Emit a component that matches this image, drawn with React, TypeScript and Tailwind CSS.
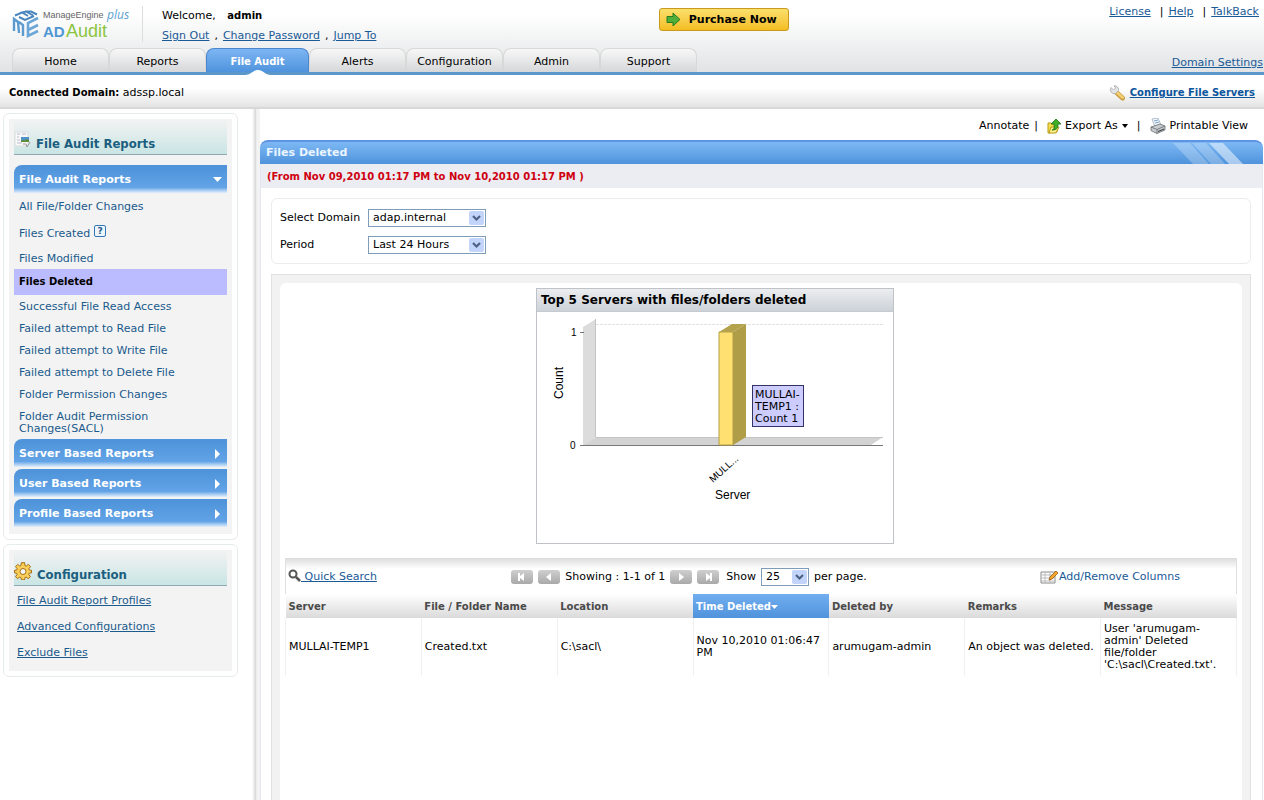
import React from 'react';

const tabs = ['Home', 'Reports', 'File Audit', 'Alerts', 'Configuration', 'Admin', 'Support'];

const reportLinks = [
  'Successful File Read Access',
  'Failed attempt to Read File',
  'Failed attempt to Write File',
  'Failed attempt to Delete File',
  'Folder Permission Changes',
];

const configLinks = ['File Audit Report Profiles', 'Advanced Configurations', 'Exclude Files'];

const columns = ['Server', 'File / Folder Name', 'Location', 'Time Deleted', 'Deleted by', 'Remarks', 'Message'];

const rows = [
  [
    'MULLAI-TEMP1',
    'Created.txt',
    'C:\\sacl\\',
    'Nov 10,2010 01:06:47 PM',
    'arumugam-admin',
    'An object was deleted.',
    "User 'arumugam-admin' Deleted file/folder 'C:\\sacl\\Created.txt'.",
  ],
];

const Logo = () => (
  <svg width="122" height="36" viewBox="0 0 122 36" role="img" aria-label="ManageEngine ADAudit Plus">
    {/* Hatched cube: lid, "M" side and "E" side */}
    <g fill="none" strokeWidth="2">
      <path d="M3 9.500l7-3 6 3.500M8 7l6-1.500 7 4M13 5.500h6l6 3M7 11l6 3 9-4" stroke="#4a86bd" />
      <path d="M2 25V13l4 3 1 11M7 16l4 3v11" stroke="#5b9bd0" strokeWidth="2.400" />
      <path d="M26 12l-10 5v13l10-5M16 24l10-5" stroke="#6aa6d8" strokeWidth="2.600" />
    </g>
    <text x="31" y="12" fontSize="9" fill="#666" fontFamily="Liberation Sans, sans-serif">ManageEngine</text>
    <text x="95" y="13" fontSize="12" fontStyle="italic" fill="#5c9fd2" fontFamily="Open Sans, sans-serif">plus</text>
    <text x="31" y="31" fontSize="15" fontWeight="bold" fill="#4f97d4" fontFamily="Liberation Sans, sans-serif">AD</text>
    <text x="54" y="31" fontSize="18" fill="#8bc53f" fontFamily="Liberation Sans, sans-serif">Audit</text>
  </svg>
);

const WrenchIcon = () => (
  <svg width="17" height="16" viewBox="0 0 17 16" aria-hidden="true">
    <path d="M8 8l5.500 5" stroke="#c79a3e" strokeWidth="5" strokeLinecap="round" />
    <path d="M8 7.500l5.500 5" stroke="#f3cf74" strokeWidth="3" strokeLinecap="round" />
    <path d="M2 2.500l2.500 2.500 2-2L5 .8a4 4 0 0 1 4.500 4.700L6.500 8.500A4 4 0 0 1 2 2.500z" fill="#e2e4e6" stroke="#a4a8ac" strokeWidth=".8" />
  </svg>
);

const ExportIcon = () => (
  <svg width="14" height="16" viewBox="0 0 14 16" aria-hidden="true">
    <path d="M1 5h3l1 1h5v8l-9 1z" fill="#f7e04b" stroke="#b59a1a" />
    <path d="M2 15l2-6h8l-3 6z" fill="#fff08a" stroke="#b59a1a" />
    <path d="M5 12c3-1 2-3 2-6H4l5-5 5 5h-3c0 4-1 6-6 6z" fill="#3fae29" stroke="#1e6e12" strokeWidth=".8" />
  </svg>
);

const PrinterIcon = () => (
  <svg width="16" height="16" viewBox="0 0 16 16" aria-hidden="true">
    <path d="M2 1l6-1 3 7-6 2z" fill="#f4f8fc" stroke="#9fb0c2" strokeWidth=".8" />
    <path d="M4 3l4-1M5 5l4-1" stroke="#7aa0c8" />
    <path d="M1 9l9-3 5 2v4l-8 3.500-6-3z" fill="#c9cdd2" stroke="#666b70" strokeWidth=".8" />
    <path d="M1 9l6 2.500L15 8M7 11.500v4" fill="none" stroke="#666b70" strokeWidth=".8" />
    <path d="M8 13.500l6-2.500" stroke="#333" />
  </svg>
);

const ReportIcon = () => (
  <svg width="17" height="18" viewBox="0 0 17 18" aria-hidden="true">
    <path d="M1 1h13v14H1z" fill="#f8f8f8" stroke="#ddd" />
    <path d="M3 3h3M8 3h4M3 6h2M3 9h3M3 12h5" stroke="#bbc" />
    <path d="M7 6h8v5H7z" fill="#4f93c9" />
    <path d="M7 10c2-2 3 0 4-1s2-1 4 0v2H7z" fill="#5e8a3c" />
    <path d="M9 13h3l1 3 3-5" fill="none" stroke="#999" />
  </svg>
);

const GearIcon = () => (
  <svg width="18" height="18" viewBox="0 0 18 18" aria-hidden="true">
    <g fill="#f9cf5a" stroke="#a86d12">
      <path d="M7.300 .7h3.400l.2 2.800 1.300.6 2.200-1.700 2.100 2.200-1.700 2.100.5 1.300 2.200.3v2.600l-2.300.3-.5 1.300 1.700 2.100-2.100 2.100-2.100-1.600-1.300.5-.3 2.200H7.300L7 15.600l-1.300-.5-2.100 1.600-2.100-2.100 1.600-2.100-.5-1.300-2.100-.3V8.300l2.200-.3.5-1.300-1.700-2.100 2.200-2.200 2.100 1.700L7 3.500z" />
      <circle cx="9" cy="9.500" r="3" fill="#f3f6f4" />
    </g>
  </svg>
);

const GridEditIcon = () => (
  <svg width="19" height="15" viewBox="0 0 19 15" aria-hidden="true">
    <path d="M1 2h14v11H1z" fill="#fff" stroke="#8a8a8a" />
    <path d="M1 5h14M1 8h14M1 11h14M5 2v11M10 2v11" stroke="#bbb" />
    <path d="M9 10l1-3 6-6 2 2-6 6z" fill="#f5a52b" stroke="#9b5b0d" strokeWidth=".8" />
  </svg>
);

interface PagerButtonProps {
  label: string;
  path: string;
}

const PagerButton = ({ label, path }: PagerButtonProps) => (
  <button type="button" aria-label={label} className="flex h-[14px] w-[22px] items-center justify-center rounded-[3px] bg-linear-to-b from-[#cfcfcf] to-[#a9a9a9]">
    <svg width="10" height="8" viewBox="0 0 10 8" fill="#fff" aria-hidden="true">
      <path d={path} />
    </svg>
  </button>
);

interface DropdownProps {
  id: string;
  value: string;
  className: string;
}

const Dropdown = ({ id, value, className }: DropdownProps) => (
  <div className={`relative h-[18px] ${className}`}>
    <select id={id} className="block h-full w-full appearance-none border border-[#7f9db9] bg-white pl-1 text-[11px] leading-4">
      <option>{value}</option>
    </select>
    <svg className="pointer-events-none absolute top-[2px] right-[2px]" width="15" height="14" viewBox="0 0 15 14" aria-hidden="true">
      <rect width="15" height="14" rx="2" fill="#c3d4fb" />
      <path d="M4 5l3.500 3.500L11 5" fill="none" stroke="#4d6185" strokeWidth="2.200" />
    </svg>
  </div>
);

interface AccordionProps {
  title: string;
  open?: boolean;
}

const AccordionHeader = ({ title, open }: AccordionProps) => (
  <button
    type="button"
    aria-expanded={!!open}
    className="flex h-7 w-full items-center justify-between rounded-tl-lg bg-linear-to-b from-[#4f94da] from-10% via-[#62a3e6] via-80% to-[#e4effa] pt-px pr-1 pl-[5px] text-[11px] font-bold text-white"
  >
    {title}
    <svg width="11" height="10" viewBox="0 0 11 10" fill="#fff" aria-hidden="true">
      <path d={open ? 'M1 2h9L5.500 7z' : 'M3 0v10l5-5z'} />
    </svg>
  </button>
);

const PanelTitle = ({ children }: { children: React.ReactNode }) => (
  <h2 className="flex h-9 items-end gap-[5px] border-b border-[#8fa9b0] bg-linear-to-b from-[#f3f3f3] to-[#c9e5e4] pb-[2px] font-['DejaVu_Sans_Condensed','DejaVu_Sans',sans-serif] text-[13px] leading-4 font-bold text-[#1b5e80]">
    {children}
  </h2>
);

const Chart = () => (
  <section className="h-[256px] w-[358px] border border-[#bfc3c7] bg-white">
    <h2 className="h-[23px] border-b border-[#c6cace] bg-linear-to-b from-[#eceef0] to-[#ccd2d8] pl-1 text-[12px] leading-[22px] font-bold whitespace-nowrap">
      Top 5 Servers with files/folders deleted
    </h2>
    <div className="relative">
      <svg width="356" height="230" viewBox="537 312 356 230" fontFamily="Liberation Sans, sans-serif" aria-label="Count of deleted files by server">
        <path d="M583 327l13-8v118l-13 8z" fill="#dcdcdc" />
        <path d="M583 445l13-8h287l-12 8z" fill="#d3d3d3" />
        <path d="M595.500 319v118M596 437.500h287" stroke="#c4c4c4" fill="none" />
        <path d="M596 324.500h287" stroke="#e2e2e2" strokeDasharray="3 1" />
        <path d="M580 332.500h4M580 445.500h303" stroke="#777" fill="none" />
        <path d="M719 332h14v113h-14z" fill="#ffe070" stroke="#b3a04a" />
        <path d="M719 332l13-8h14l-13 8z" fill="#b5a24c" />
        <path d="M733 332l13-8v113l-13 8z" fill="#b09d48" />
        <text x="571" y="336" fontSize="10">1</text>
        <text x="570" y="449" fontSize="10">0</text>
        <text x="563" y="399" fontSize="12" transform="rotate(-90 563 399)">Count</text>
        <text x="713" y="483" fontSize="10" transform="rotate(-42 713 483)">MULL...</text>
        <text x="715" y="499" fontSize="12">Server</text>
      </svg>
      <div className="absolute top-[73px] left-[215px] w-[52px] border border-[#33336a] bg-[#ccccff] pt-[3px] pb-px pl-[2px] text-[11px] leading-3 whitespace-nowrap">
        MULLAI-<br />TEMP1 :<br />Count 1
      </div>
    </div>
  </section>
);

const App = () => (
  <div className="flex min-h-screen flex-col bg-white font-['DejaVu_Sans',sans-serif] text-[11px] leading-[14px] text-black">
    <header className="border-b-[3px] border-[#5b97c9] bg-linear-to-b from-white from-20% to-[#e2e3e5] pr-px">
      <div className="flex h-12 items-start">
        <div className="flex w-[52%] items-start">
          <div className="mt-[6px] w-[143px] border-r border-[#ddd] pl-3">
            <Logo />
          </div>
          <div className="pt-[9px] pl-[19px]">
            <p>
              Welcome, <b className="ml-2 text-[10px]">admin</b>
            </p>
            <p className="mt-[6px] flex gap-[5px] text-[#1a5a96]">
              <a href="#" className="underline">Sign Out</a>
              <span className="text-black">,</span>
              <a href="#" className="underline">Change Password</a>
              <span className="text-black">,</span>
              <a href="#" className="underline">Jump To</a>
            </p>
          </div>
        </div>
        <button type="button" className="mt-2 ml-[2px] flex h-[23px] w-[130px] items-center gap-2 rounded-[3px] border border-[#c99a1e] bg-linear-to-b from-[#fbe06a] to-[#f4bd1d] pl-1.5 text-[11px] font-bold whitespace-nowrap">
          <svg width="15" height="15" viewBox="0 0 15 15" aria-hidden="true">
            <path d="M1 4.500h6V1l7 6.500L7 14v-3.500H1z" fill="#4fae3a" stroke="#2a7d1e" />
          </svg>
          Purchase Now
        </button>
        <div className="ml-auto flex gap-[5px] pt-[5px] pr-1 text-[#1a5a96]">
          <a href="#" className="mr-1 underline">License</a>
          <span className="text-black">|</span>
          <a href="#" className="mr-1 underline">Help</a>
          <span className="text-black">|</span>
          <a href="#" className="underline">TalkBack</a>
        </div>
      </div>
      <div className="flex h-6 items-end justify-between">
        <nav className="flex pl-3">
          {tabs.map((tab) =>
            tab === 'File Audit' ? (
              <a key={tab} href="#" className="relative h-6 w-[103px] rounded-t-lg border border-b-0 border-[#4b86cf] bg-linear-to-b from-[#7db6f3] to-[#4f93dc] pt-[6px] text-center text-[10px] font-bold text-white">
                {tab}
                <svg className="absolute -bottom-[3px] left-[38px]" width="26" height="6" viewBox="0 0 26 6" aria-hidden="true">
                  <path d="M0 6c6 0 8-5 13-5s7 5 13 5z" fill="#fff" />
                </svg>
              </a>
            ) : (
              <a key={tab} href="#" className="h-6 w-[97px] rounded-t-lg border border-b-0 border-[#d8d8d8] bg-linear-to-b from-[#f8f8f8] to-[#d6d7d9] pt-[6px] text-center">
                {tab}
              </a>
            ),
          )}
        </nav>
        <a href="#" className="mb-[2px] text-[#1a5a96] underline">Domain Settings</a>
      </div>
    </header>

    <div className="flex h-[34px] items-center justify-between border-b-2 border-[#d8d8d8] bg-linear-to-b from-white from-40% to-[#e4e4e4] px-[9px] pt-1">
      <p>
        <b className="text-[10px]">Connected Domain:</b> adssp.local
      </p>
      <a href="#" className="flex items-center gap-1 text-[10px] font-bold text-[#0a559c] underline">
        <WrenchIcon />
        Configure File Servers
      </a>
    </div>

    <div className="flex flex-1">
      <aside className="w-[252px] shrink-0 pt-1 pr-[14px] pl-[3px] text-[#1a5a8c]">
        <div className="rounded-md border border-[#e6ece9] p-[5px]">
          <div className="bg-[#f3f3f3] px-[5px] pb-[7px]">
            <PanelTitle>
              <span className="mb-[3px]"><ReportIcon /></span>
              File Audit Reports
            </PanelTitle>
            <div className="mt-[10px]">
              <AccordionHeader title="File Audit Reports" open />
              <ul>
                <li className="pt-[7px] pl-[5px]"><a href="#">All File/Folder Changes</a></li>
                <li className="flex gap-1 pt-[11px] pl-[5px]">
                  <a href="#" className="pt-[2px]">Files Created</a>
                  <button type="button" aria-label="Help" className="h-3 w-3 rounded-[2px] border border-[#3577b5] bg-[#edf5fc] text-[9px] leading-[10px] font-bold">?</button>
                </li>
                <li className="pt-[11px] pb-[3px] pl-[5px]"><a href="#">Files Modified</a></li>
                <li className="bg-[#bbbbff] pl-[5px] text-[10px] leading-[26px] font-bold text-black"><a href="#">Files Deleted</a></li>
                <li className="pt-[5px] pb-1 pl-[5px]"><a href="#">{reportLinks[0]}</a></li>
                {reportLinks.slice(1).map((link) => (
                  <li key={link} className="py-1 pl-[5px]"><a href="#">{link}</a></li>
                ))}
                <li className="pt-[5px] pb-1 pl-[5px] leading-3"><a href="#">Folder Audit Permission<br />Changes(SACL)</a></li>
              </ul>
              <div className="flex flex-col gap-[2px]">
                <AccordionHeader title="Server Based Reports" />
                <AccordionHeader title="User Based Reports" />
                <AccordionHeader title="Profile Based Reports" />
              </div>
            </div>
          </div>
        </div>
        <div className="mt-1 rounded-md border border-[#e6ece9] p-[5px]">
          <div className="bg-[#f3f3f3] px-[5px] pb-[11px]">
            <PanelTitle>
              <span className="mb-[3px]"><GearIcon /></span>
              Configuration
            </PanelTitle>
            <ul className="space-y-3 pt-2 pl-[3px]">
              {configLinks.map((link) => (
                <li key={link}><a href="#" className="underline">{link}</a></li>
              ))}
            </ul>
          </div>
        </div>
      </aside>

      <div className="w-2 shrink-0 bg-linear-to-r from-white via-[#dadada] via-45% to-[#f3f3f3] to-60%" />

      <main className="flex min-w-0 flex-1 flex-col pr-px">
        <div className="flex h-[31px] items-center justify-end gap-[5px] pt-[3px] pr-[15px]">
          <a href="#">Annotate</a>
          <span>|</span>
          <a href="#" className="ml-1 flex items-center gap-1">
            <ExportIcon />
            Export As
            <svg width="6" height="4" viewBox="0 0 6 4" aria-hidden="true"><path d="M0 0h6L3 4z" /></svg>
          </a>
          <span className="ml-1">|</span>
          <a href="#" className="ml-1 flex items-center gap-1">
            <PrinterIcon />
            Printable View
          </a>
        </div>

        <div className="flex h-6 items-center justify-between rounded-t-lg border-t-2 border-[#5f94e4] bg-linear-to-b from-[#7db8f4] to-[#4f93dc] pl-[6px]">
          <h1 className="font-bold text-[#eaf5ff]">Files Deleted</h1>
          <svg className="mr-[18px]" width="72" height="21" viewBox="0 0 72 21" aria-hidden="true">
            <path d="M0 0h17l19 21H20z" fill="#fff" opacity=".25" />
            <path d="M19 0h14l19 21H38z" fill="#fff" opacity=".25" />
            <path d="M36 0h14l20 21H56z" fill="#fff" opacity=".5" />
          </svg>
        </div>

        <div className="flex flex-1 flex-col border-x border-[#e4e7f2]">
          <p className="h-6 bg-[#ebedf2] pl-[6px] text-[10px] leading-[26px] font-bold text-[#d00010]">
            (From Nov 09,2010 01:17 PM to Nov 10,2010 01:17 PM )
          </p>

          <form className="mr-[11px] ml-[10px] mt-[10px] flex h-[66px] flex-col justify-center gap-[9px] rounded-md border border-[#ececec] pl-2">
            <div className="flex items-center">
              <label htmlFor="domain" className="w-[88px] whitespace-nowrap">Select Domain</label>
              <Dropdown id="domain" value="adap.internal" className="w-[118px]" />
            </div>
            <div className="flex items-center">
              <label htmlFor="period" className="w-[88px]">Period</label>
              <Dropdown id="period" value="Last 24 Hours" className="w-[118px]" />
            </div>
          </form>

          <div className="mr-[11px] ml-[10px] mt-[10px] flex flex-1 flex-col border border-b-0 border-[#e2e2e2] bg-[#f2f2f2] px-2 pt-2">
            <div className="flex-1 rounded-t-md bg-white px-[5px] pt-[5px]">
              <div className="flex justify-center pr-[92px]">
                <Chart />
              </div>

              <div className="mt-[14px] grid h-9 grid-cols-[1fr_auto_1fr] items-center border-x border-[#e0e0e0] bg-linear-to-b from-[#dcdcdc] to-white to-30% pt-[2px] pl-[2px]">
                <a href="#" className="flex items-center text-[#1a5a96]">
                  <svg className="mb-1" width="13" height="13" viewBox="0 0 13 13" fill="none" stroke="#555" aria-hidden="true">
                    <circle cx="5" cy="5" r="3.500" strokeWidth="2" />
                    <path d="M8 8l4 4" strokeWidth="2.500" />
                  </svg>
                  <span className="whitespace-pre underline"> Quick Search</span>
                </a>
                <div className="flex items-center gap-[5px] pr-[146px] whitespace-nowrap">
                  <PagerButton label="First page" path="M1 0h2v3l4-3v8L3 5v3H1z" />
                  <PagerButton label="Previous page" path="M7 0v8L2 4z" />
                  <span>Showing : 1-1 of 1</span>
                  <PagerButton label="Next page" path="M3 0v8l5-4z" />
                  <PagerButton label="Last page" path="M9 0H7v3L3 0v8l4-3v3h2z" />
                  <label htmlFor="page-size" className="ml-[2px]">Show</label>
                  <Dropdown id="page-size" value="25" className="w-12" />
                  <span>per page.</span>
                </div>
                <a href="#" className="flex items-center justify-self-end pr-14 whitespace-nowrap text-[#1a5a96]">
                  <GridEditIcon />
                  Add/Remove Columns
                </a>
              </div>

              <table className="w-full table-fixed border-collapse text-left">
                <thead>
                  <tr className="h-6 bg-linear-to-b from-white to-[#dadada]">
                    {columns.map((column) =>
                      column === 'Time Deleted' ? (
                        <th key={column} aria-sort="descending" className="bg-linear-to-b from-[#72aef0] to-[#4f93dc] pt-px pl-[3px] text-[10px] text-white">
                          {column}
                          <svg className="inline" width="7" height="4" viewBox="0 0 7 4" fill="#fff" aria-hidden="true"><path d="M0 0h7L3.500 4z" /></svg>
                        </th>
                      ) : (
                        <th key={column} className="pt-px pl-[3px] text-[10px] text-[#4a4a4a]">{column}</th>
                      ),
                    )}
                  </tr>
                </thead>
                <tbody>
                  {rows.map((row) => (
                    <tr key={row[0]} className="h-[58px]">
                      {row.map((cell, i) => (
                        <td key={columns[i]} className="border-x border-[#f0f0f0] pl-[3px] text-[11px] leading-3">{cell}</td>
                      ))}
                    </tr>
                  ))}
                </tbody>
              </table>
            </div>
          </div>
        </div>
      </main>
    </div>
  </div>
);

export default App;
